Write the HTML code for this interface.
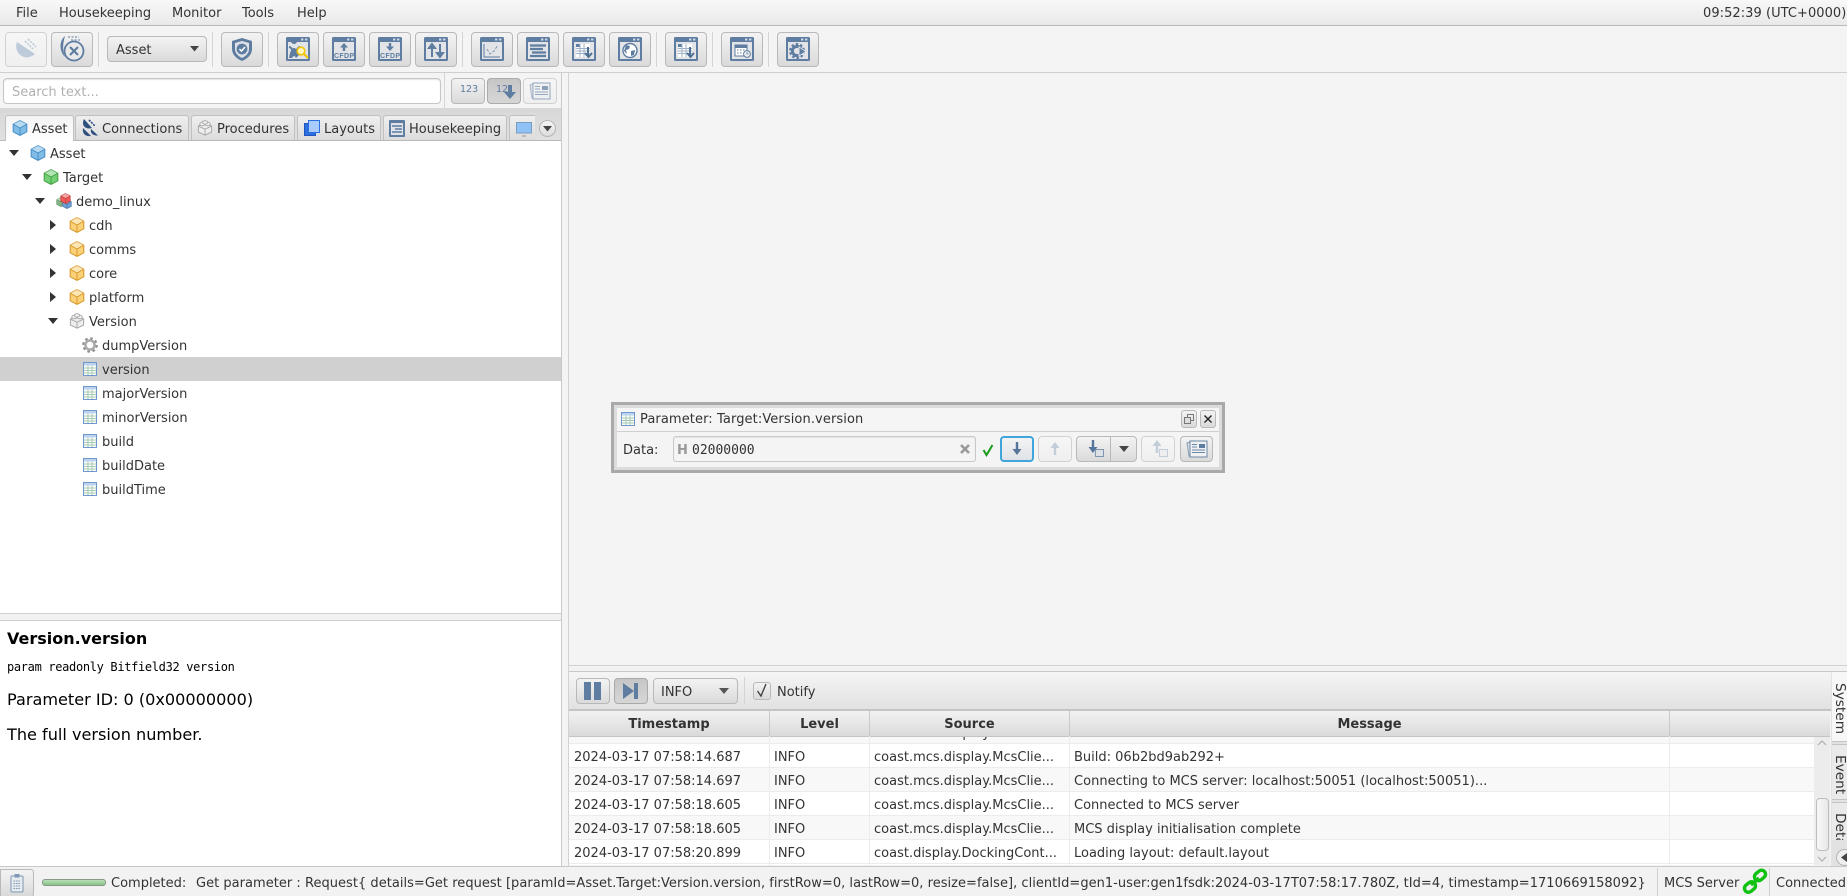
<!DOCTYPE html>
<html><head><meta charset="utf-8"><title>Coast</title>
<style>
*{box-sizing:border-box}
html,body{margin:0;padding:0;width:1847px;height:896px;overflow:hidden;background:#f4f4f4}
body{position:relative;font:13px/16px "DejaVu Sans","Liberation Sans",sans-serif;color:#333}
.a{position:absolute}
.t{position:absolute;white-space:nowrap;line-height:16px;margin-top:2px}
.b{position:absolute;border:1px solid #b9b9b9;border-radius:4px;background:linear-gradient(#f3f3f3,#dadada)}
.d{background:linear-gradient(#f6f6f6,#efefef);border-color:#d2d2d2}
.p{background:linear-gradient(#c6c6c6,#d6d6d6);border-color:#aaa}
.s{position:absolute;width:1px;background:#d4d4d4}
svg{position:absolute;overflow:visible}
.tab{position:absolute;top:115px;height:25px;border:1px solid #c0c0c0;border-bottom:0;border-radius:3px 3px 0 0;background:linear-gradient(#efefef,#dcdcdc)}
.row{position:absolute;left:0;width:561px;height:24px}
.lr{position:absolute;left:569px;width:1245px;height:24px;border-bottom:1px solid #ececec;overflow:hidden}
.lr span{position:absolute;top:6px;white-space:nowrap}
.th{position:absolute;top:711px;height:25px;font-weight:bold;text-align:center;line-height:27px;background:linear-gradient(#f2f2f2,#dadada);border-right:1px solid #c8c8c8;color:#333;overflow:hidden}
.vl{position:absolute;width:1px;top:736px;height:129px;background:#ececec}
.v{position:absolute;writing-mode:vertical-rl;white-space:nowrap;line-height:15px;font-size:13.7px}
</style></head><body>
<svg width="0" height="0" style="position:absolute">
<defs>
<symbol id="win" viewBox="0 0 24 24"><rect x="0" y="0" width="24" height="24" rx="1.5" fill="#5e7da1"/><rect x="2" y="5" width="20" height="17" fill="#e2e4e7"/><rect x="15" y="1.5" width="2.4" height="2" fill="#cdd8e4"/><rect x="19" y="1.5" width="2.4" height="2" fill="#cdd8e4"/></symbol>
<symbol id="cube" viewBox="0 0 16 16"><path d="M8 .6 14.8 4.2V11.8L8 15.4 1.2 11.8V4.2Z" stroke-width="1.1" stroke-linejoin="round"/><path d="M8 .6 14.8 4.2 8 8 1.2 4.2Z" fill="#fff" fill-opacity=".45" stroke="none"/><path d="M1.6 4.4 8 8 14.4 4.4M8 8V15" fill="none" stroke-width="1"/></symbol>
<symbol id="lego" viewBox="0 0 16 16"><path d="M8 3 14.6 6V12L8 15.2 1.4 12V6Z" fill="#eee" stroke="#a9a9a9"/><path d="M1.6 6.2 8 9.2 14.4 6.2M8 9.2V15" fill="none" stroke="#a9a9a9"/><ellipse cx="5.4" cy="4" rx="2.6" ry="1.7" fill="#f4f4f4" stroke="#a9a9a9"/><ellipse cx="10.6" cy="4" rx="2.6" ry="1.7" fill="#f4f4f4" stroke="#a9a9a9"/><ellipse cx="8" cy="2.4" rx="2.6" ry="1.7" fill="#f4f4f4" stroke="#a9a9a9"/></symbol>
<symbol id="param" viewBox="0 0 14 14"><rect x=".5" y=".5" width="13" height="13" fill="#fff" stroke="#6f97cc"/><rect x="1" y="1" width="12" height="2.5" fill="#bcd2ee"/><path d="M1 6H13M1 8.5H13M1 11H13M5 3.5V13M9 3.5V13" stroke="#a5c9b0" stroke-width="1" fill="none"/></symbol>
<symbol id="arr" viewBox="0 0 10 10"><path d="M0 2H10L5 8Z" fill="#333"/></symbol>
<symbol id="arr2" viewBox="0 0 10 10"><path d="M2 0V10L8 5Z" fill="#333"/></symbol>
<symbol id="tbl" viewBox="0 0 24 24"><use href="#win" width="24" height="24"/><rect x="4" y="7" width="14" height="13" fill="#fff"/><rect x="4" y="7" width="3.5" height="3" fill="#5e7da1"/><path d="M4 11.5H18M4 14H18M4 16.5H18M8 7V20M12 7V20" stroke="#9fb1c6" fill="none"/><path d="M16 10V19M13 16 16.5 20 20 16" fill="none" stroke="#4f6f94" stroke-width="2"/></symbol>
<symbol id="doc" viewBox="0 0 24 18"><path d="M2 3 8 1V15L4 16Z" fill="#d8dee5" stroke="#8c9fb4"/><rect x="5" y="1" width="17" height="16" fill="#eef0f2" stroke="#6c88a8"/><rect x="14" y="4" width="6" height="4" fill="#5e7da1"/><path d="M7 4.5H12M7 7H12M7 10H20M7 12.5H20" stroke="#6c88a8" fill="none"/></symbol>
</defs></svg>

<!-- menu -->
<div class="a" style="left:0;top:0;width:1847px;height:26px;background:linear-gradient(#f8f8f8,#e9e9e9);border-bottom:1px solid #b9b9b9"></div>
<span class="t" style="left:16px;top:4px">File</span>
<span class="t" style="left:59px;top:4px">Housekeeping</span>
<span class="t" style="left:172px;top:4px">Monitor</span>
<span class="t" style="left:242px;top:4px">Tools</span>
<span class="t" style="left:297px;top:4px">Help</span>
<span class="t" style="left:1703px;top:4px;letter-spacing:.05px">09:52:39 (UTC+0000)</span>

<!-- toolbar -->
<div class="a" style="left:0;top:72px;width:1847px;height:1px;background:#cfcfcf"></div>
<div class="b d" style="left:5px;top:32px;width:42px;height:35px"></div>
<svg style="left:16px;top:39px" width="20" height="20"><path d="M1 3C-3 13 8 24 19 15Z" fill="#bccada"/><path d="M9 2 17 10M12 0 20 8" stroke="#bccada" stroke-width="1.6" fill="none" stroke-dasharray="2 1.2"/></svg>
<div class="b" style="left:51px;top:32px;width:42px;height:35px"></div>
<svg style="left:59px;top:35px" width="26" height="29"><path d="M6 1C0 6 0 16 6 22 3 15 4 8 6 1Z" fill="#5e7da1"/><path d="M9 2h11M12 5h10" stroke="#5e7da1" stroke-dasharray="2 1.5" fill="none"/><circle cx="15" cy="16" r="9.5" fill="#eaeaea" stroke="#5e7da1" stroke-width="1.8"/><path d="M11 12l8 8m0-8-8 8" stroke="#5e7da1" stroke-width="2.2"/></svg>
<div class="s" style="left:98px;top:32px;height:35px"></div>
<div class="b" style="left:107px;top:36px;width:100px;height:26px"></div>
<span class="t" style="left:116px;top:41px">Asset</span>
<svg style="left:189px;top:44px" width="11" height="10"><path d="M1 2H10L5.5 7.5Z" fill="#444"/></svg>
<div class="s" style="left:212px;top:32px;height:35px"></div>
<div class="b" style="left:221px;top:32px;width:42px;height:35px"></div>
<svg style="left:231px;top:37px" width="22" height="25"><path d="M11 1 21 4V12C21 18 16 22 11 24 6 22 1 18 1 12V4Z" fill="#5e7da1"/><path d="M11 4 18 6V12C18 16 15 19 11 21 7 19 4 16 4 12V6Z" fill="#dfe3e8"/><circle cx="11" cy="12" r="5.4" fill="#5e7da1"/><path d="M8.4 12 10.4 14 14 10" stroke="#fff" stroke-width="1.5" fill="none"/></svg>
<div class="s" style="left:268px;top:32px;height:35px"></div>

<div class="b" style="left:277px;top:32px;width:42px;height:35px"></div>
<svg style="left:286px;top:37px" width="24" height="24"><use href="#win" width="24" height="24"/><path d="M8 7a3 3 0 1 1 .1 0ZM3 21C4 14 6 11 8 11 10 11 11 14 13 18L10 21 8 18 6 21Z" fill="#5e7da1"/><path d="M3 10C5 10 6 12 7 14M14 10C12 10 10 14 7 19" stroke="#5e7da1" stroke-width="2" fill="none"/><circle cx="15" cy="14" r="3.8" fill="#fff6c4" stroke="#f2c500" stroke-width="1.6"/><path d="M18 17 22 21" stroke="#f2c500" stroke-width="2.2"/></svg>
<div class="b" style="left:323px;top:32px;width:42px;height:35px"></div>
<svg style="left:332px;top:37px" width="24" height="24"><use href="#win" width="24" height="24"/><path d="M12 6 8 10.5H10.8V14H13.2V10.5H16Z" fill="#5e7da1"/><text x="12" y="21" font-family="Liberation Sans" font-size="7" font-weight="bold" text-anchor="middle" fill="#5e7da1" textLength="20">CFDP</text></svg>
<div class="b" style="left:369px;top:32px;width:42px;height:35px"></div>
<svg style="left:378px;top:37px" width="24" height="24"><use href="#win" width="24" height="24"/><path d="M12 14 8 9.5H10.8V6H13.2V9.5H16Z" fill="#5e7da1"/><text x="12" y="21" font-family="Liberation Sans" font-size="7" font-weight="bold" text-anchor="middle" fill="#5e7da1" textLength="20">CFDP</text></svg>
<div class="b" style="left:415px;top:32px;width:42px;height:35px"></div>
<svg style="left:424px;top:37px" width="24" height="24"><use href="#win" width="24" height="24"/><path d="M8 7V20M8 7 5 11H11ZM16 20V7M16 20 13 16H19Z" stroke="#5e7da1" stroke-width="2" fill="#5e7da1"/></svg>
<div class="s" style="left:462px;top:32px;height:35px"></div>

<div class="b" style="left:471px;top:32px;width:42px;height:35px"></div>
<svg style="left:480px;top:37px" width="24" height="24"><use href="#win" width="24" height="24"/><path d="M4 7V20H20" stroke="#5e7da1" fill="none"/><path d="M7 12 10 17 14 14 18 8" stroke="#7f97b3" fill="none" stroke-dasharray="3 1.5"/></svg>
<div class="b" style="left:517px;top:32px;width:42px;height:35px"></div>
<svg style="left:526px;top:37px" width="24" height="24"><use href="#win" width="24" height="24"/><path d="M4 8.5H20M4 12H17M6 15.5H20M4 19H20" stroke="#5e7da1" stroke-width="2.2" fill="none"/></svg>
<div class="b" style="left:563px;top:32px;width:42px;height:35px"></div>
<svg style="left:572px;top:37px" width="24" height="24"><use href="#tbl" width="24" height="24"/></svg>
<div class="b" style="left:609px;top:32px;width:42px;height:35px"></div>
<svg style="left:618px;top:37px" width="24" height="24"><use href="#win" width="24" height="24"/><circle cx="12" cy="13.5" r="7" fill="#fff" stroke="#5e7da1" stroke-width="1.4"/><path d="M8 8 12 9 11 12 8 13 9 17 6 14ZM13 14 17 13 16 18 13 19Z" fill="#5e7da1"/></svg>
<div class="s" style="left:656px;top:32px;height:35px"></div>
<div class="b" style="left:665px;top:32px;width:42px;height:35px"></div>
<svg style="left:674px;top:37px" width="24" height="24"><use href="#tbl" width="24" height="24"/></svg>
<div class="s" style="left:712px;top:32px;height:35px"></div>
<div class="b" style="left:721px;top:32px;width:42px;height:35px"></div>
<svg style="left:730px;top:37px" width="24" height="24"><use href="#win" width="24" height="24"/><rect x="5" y="8" width="12" height="11" fill="#fff" stroke="#5e7da1"/><rect x="5" y="8" width="12" height="3" fill="#5e7da1"/><path d="M7 13h1.5M10 13h1.5M13 13h1.5M7 16h1.5M10 16h1.5" stroke="#5e7da1"/><circle cx="17" cy="17" r="3.4" fill="#eee" stroke="#5e7da1"/><path d="M17 15v2h1.5" stroke="#5e7da1" fill="none" stroke-width=".8"/></svg>
<div class="s" style="left:768px;top:32px;height:35px"></div>
<div class="b" style="left:777px;top:32px;width:42px;height:35px"></div>
<svg style="left:786px;top:37px" width="24" height="24"><use href="#win" width="24" height="24"/><circle cx="11" cy="14" r="4.6" fill="none" stroke="#5e7da1" stroke-width="3"/><circle cx="11" cy="14" r="7" fill="none" stroke="#5e7da1" stroke-width="2" stroke-dasharray="2.5 2"/><path d="M13 10 20 14.5 13 19Z" fill="#5e7da1" stroke="#e2e4e7"/></svg>

<!-- left panel -->
<div class="a" style="left:561px;top:73px;width:1px;height:793px;background:#c9c9c9"></div>
<div class="a" style="left:568px;top:73px;width:1px;height:793px;background:#d2d2d2"></div>
<div class="a" style="left:444px;top:73px;width:1px;height:35px;background:#d6d6d6"></div>
<div class="a" style="left:3px;top:78px;width:438px;height:26px;background:#fff;border:1px solid #c6c6c6;border-radius:4px;box-shadow:inset 0 1px 1px #e4e4e4"></div>
<span class="t" style="left:12px;top:83px;color:#b0b0b0">Search text...</span>
<div class="b" style="left:451px;top:78px;width:34px;height:26px"></div>
<span class="t" style="left:460px;top:81px;font:9.5px/14px 'DejaVu Sans',sans-serif;color:#5e7da1">123</span>
<div class="b p" style="left:487px;top:78px;width:34px;height:26px"></div>
<span class="t" style="left:496px;top:81px;font:9.5px/14px 'DejaVu Sans',sans-serif;color:#5e7da1">12</span>
<svg style="left:503px;top:85px" width="14" height="16"><path d="M5 0H9V7H13L7 14 1 7H5Z" fill="#5e7da1"/></svg>
<div class="b d" style="left:523px;top:78px;width:34px;height:26px"></div>
<svg style="left:528px;top:82px;opacity:.7" width="24" height="18"><use href="#doc" width="24" height="18"/></svg>

<div class="a" style="left:0;top:108px;width:561px;height:33px;background:linear-gradient(#d8d8d8,#e0e0e0);border-bottom:1px solid #b9b9b9"></div>
<div class="tab" style="left:5px;width:69px;height:26px;background:linear-gradient(#f3f3f3,#fff)"></div>
<div class="tab" style="left:75px;width:114px"></div>
<div class="tab" style="left:191px;width:104px"></div>
<div class="tab" style="left:297px;width:84px"></div>
<div class="tab" style="left:383px;width:124px"></div>
<div class="tab" style="left:509px;width:26px;border-right:0;border-radius:3px 0 0 0"></div>
<svg style="left:12px;top:120px;fill:#7fbde8;stroke:#4a8fc4" width="16" height="16"><use href="#cube" width="16" height="16"/></svg>
<span class="t" style="left:32px;top:120px">Asset</span>
<svg style="left:82px;top:119px" width="16" height="18"><path d="M2 0C-1 6 3 11 10 9Z" fill="#2e4f7e"/><path d="M9 10C8 14 11 17 16 16.5Z" fill="#2e4f7e"/><path d="M1 9C0 14 3 18 9 17Z" fill="#2e4f7e"/><path d="M7 1l6 6" stroke="#2e4f7e" stroke-width="1.6" stroke-dasharray="2 1"/></svg>
<span class="t" style="left:102px;top:120px">Connections</span>
<svg style="left:197px;top:120px" width="16" height="16"><use href="#lego" width="16" height="16"/></svg>
<span class="t" style="left:217px;top:120px">Procedures</span>
<svg style="left:304px;top:120px" width="16" height="17"><rect x=".5" y="3.5" width="11" height="12" fill="#2d6ee0" stroke="#1e55c0"/><rect x="4.5" y=".5" width="11" height="12" fill="#a8ccff" stroke="#2d6ee0"/></svg>
<span class="t" style="left:324px;top:120px">Layouts</span>
<svg style="left:389px;top:120px" width="16" height="17"><rect x="0" y="0" width="16" height="17" rx="1" fill="#5e7da1"/><rect x="2" y="3" width="12" height="12" fill="#dfe3e8"/><path d="M3 6H13M6 9H13M3 12H13" stroke="#5e7da1" stroke-width="1.6"/></svg>
<span class="t" style="left:409px;top:120px">Housekeeping</span>
<svg style="left:516px;top:122px" width="16" height="15"><rect x=".5" y=".5" width="15" height="10.5" fill="#8fc3f7" stroke="#7a9cc0"/><path d="M6 14h4" stroke="#aaa" stroke-width="1.4"/></svg>
<div class="a" style="left:539px;top:120px;width:17px;height:17px;border-radius:50%;border:1px solid #b5b5b5;background:linear-gradient(#f5f5f5,#dcdcdc)"></div>
<svg style="left:543px;top:126px" width="9" height="6"><path d="M0 0H9L4.5 5.5Z" fill="#444"/></svg>

<div class="a" style="left:0;top:141px;width:561px;height:472px;background:#fff"></div>
<div class="row" style="top:357px;background:#d0d0d0"></div>

<svg style="left:9px;top:148px" width="10" height="10"><use href="#arr" width="10" height="10"/></svg>
<svg style="left:30px;top:145px;fill:#7fbde8;stroke:#4a8fc4" width="16" height="16"><use href="#cube" width="16" height="16"/></svg>
<span class="t" style="left:50px;top:145px">Asset</span>
<svg style="left:22px;top:172px" width="10" height="10"><use href="#arr" width="10" height="10"/></svg>
<svg style="left:43px;top:169px;fill:#75d075;stroke:#46a346" width="16" height="16"><use href="#cube" width="16" height="16"/></svg>
<span class="t" style="left:63px;top:169px">Target</span>
<svg style="left:35px;top:196px" width="10" height="10"><use href="#arr" width="10" height="10"/></svg>
<svg style="left:56px;top:193px;fill:#8ab58a;stroke:#5f8f5f" width="10" height="10" ><use href="#cube" width="10" height="10" y="4"/></svg>
<svg style="left:62px;top:199px;fill:#6f9fd4;stroke:#3f6fa8" width="10" height="10"><use href="#cube" width="10" height="10"/></svg>
<svg style="left:60px;top:193px;fill:#ee5a5a;stroke:#c23a3a" width="11" height="11"><use href="#cube" width="11" height="11"/></svg>
<span class="t" style="left:76px;top:193px">demo_linux</span>

<svg style="left:48px;top:220px" width="10" height="10"><use href="#arr2" width="10" height="10"/></svg>
<svg style="left:69px;top:217px;fill:#fbd27a;stroke:#d99a2b" width="16" height="16"><use href="#cube" width="16" height="16"/></svg>
<span class="t" style="left:89px;top:217px">cdh</span>
<svg style="left:48px;top:244px" width="10" height="10"><use href="#arr2" width="10" height="10"/></svg>
<svg style="left:69px;top:241px;fill:#fbd27a;stroke:#d99a2b" width="16" height="16"><use href="#cube" width="16" height="16"/></svg>
<span class="t" style="left:89px;top:241px">comms</span>
<svg style="left:48px;top:268px" width="10" height="10"><use href="#arr2" width="10" height="10"/></svg>
<svg style="left:69px;top:265px;fill:#fbd27a;stroke:#d99a2b" width="16" height="16"><use href="#cube" width="16" height="16"/></svg>
<span class="t" style="left:89px;top:265px">core</span>
<svg style="left:48px;top:292px" width="10" height="10"><use href="#arr2" width="10" height="10"/></svg>
<svg style="left:69px;top:289px;fill:#fbd27a;stroke:#d99a2b" width="16" height="16"><use href="#cube" width="16" height="16"/></svg>
<span class="t" style="left:89px;top:289px">platform</span>
<svg style="left:48px;top:316px" width="10" height="10"><use href="#arr" width="10" height="10"/></svg>
<svg style="left:69px;top:313px" width="16" height="16"><use href="#lego" width="16" height="16"/></svg>
<span class="t" style="left:89px;top:313px">Version</span>

<svg style="left:82px;top:337px" width="16" height="16"><circle cx="8" cy="8" r="6.2" fill="none" stroke="#8f8f8f" stroke-width="3.2" stroke-dasharray="2.4 2.47"/><circle cx="8" cy="8" r="4.6" fill="none" stroke="#a9a9a9" stroke-width="2.4"/></svg>
<span class="t" style="left:102px;top:337px">dumpVersion</span>
<svg style="left:83px;top:362px" width="14" height="14"><use href="#param" width="14" height="14"/></svg>
<span class="t" style="left:102px;top:361px">version</span>
<svg style="left:83px;top:386px" width="14" height="14"><use href="#param" width="14" height="14"/></svg>
<span class="t" style="left:102px;top:385px">majorVersion</span>
<svg style="left:83px;top:410px" width="14" height="14"><use href="#param" width="14" height="14"/></svg>
<span class="t" style="left:102px;top:409px">minorVersion</span>
<svg style="left:83px;top:434px" width="14" height="14"><use href="#param" width="14" height="14"/></svg>
<span class="t" style="left:102px;top:433px">build</span>
<svg style="left:83px;top:458px" width="14" height="14"><use href="#param" width="14" height="14"/></svg>
<span class="t" style="left:102px;top:457px">buildDate</span>
<svg style="left:83px;top:482px" width="14" height="14"><use href="#param" width="14" height="14"/></svg>
<span class="t" style="left:102px;top:481px">buildTime</span>

<!-- splitter + details -->
<div class="a" style="left:0;top:613px;width:561px;height:8px;background:#f1f1f1;border-top:1px solid #cfcfcf;border-bottom:1px solid #cfcfcf"></div>
<div class="a" style="left:0;top:621px;width:561px;height:245px;background:#fff"></div>
<span class="t" style="left:7px;top:629px;font-weight:bold;font-size:16px;color:#000">Version.version</span>
<span class="t" style="left:7px;top:657px;font-family:'DejaVu Sans Mono',monospace;font-size:12px;letter-spacing:-.33px;color:#000">param readonly Bitfield32 version</span>
<span class="t" style="left:7px;top:690px;font-size:16.1px;color:#000">Parameter ID: 0 (0x00000000)</span>
<span class="t" style="left:7px;top:725px;font-size:16.1px;color:#000">The full version number.</span>

<!-- parameter window -->
<div class="a" style="left:611px;top:402px;width:614px;height:71px;border:3px solid #a9a9a9;background:#dcdcdc"></div>
<div class="a" style="left:617px;top:408px;width:602px;height:23px;background:#f5f5f5"></div>
<div class="a" style="left:617px;top:431px;width:602px;height:1px;background:#cfcfcf"></div>
<div class="a" style="left:617px;top:432px;width:602px;height:35px;background:#f4f4f4"></div>
<svg style="left:621px;top:412px" width="14" height="14"><use href="#param" width="14" height="14"/></svg>
<span class="t" style="left:640px;top:410px;letter-spacing:.1px">Parameter: Target:Version.version</span>
<div class="b" style="left:1181px;top:410px;width:16px;height:18px;border-radius:3px"></div>
<svg style="left:1184px;top:414px" width="10" height="10"><rect x="3.5" y=".5" width="6" height="6" fill="none" stroke="#777"/><rect x=".5" y="3.5" width="6" height="6" fill="#ddd" stroke="#777"/></svg>
<div class="b" style="left:1200px;top:410px;width:16px;height:18px;border-radius:3px"></div>
<svg style="left:1204px;top:415px" width="8" height="8"><path d="M.5.5 7.5 7.5M7.5.5.5 7.5" stroke="#222" stroke-width="1.4"/></svg>
<span class="t" style="left:623px;top:441px">Data:</span>
<div class="a" style="left:673px;top:436px;width:303px;height:26px;background:#f4f4f4;border:1px solid #c8c8c8;border-radius:3px;box-shadow:inset 0 1px 1px #e4e4e4"></div>
<span class="t" style="left:677px;top:441px;font-weight:bold;color:#999">H</span>
<span class="t" style="left:692px;top:441px;font-family:'DejaVu Sans Mono',monospace;font-size:13px">02000000</span>
<svg style="left:960px;top:444px" width="10" height="10"><path d="M1 1 9 9M9 1 1 9" stroke="#999" stroke-width="2.6"/></svg>
<svg style="left:982px;top:444px" width="12" height="12"><path d="M1.5 6 4.5 11 10.5 1" stroke="#1c9a1c" stroke-width="2" fill="none"/></svg>
<div class="b" style="left:1000px;top:436px;width:34px;height:26px;border:2px solid #3fa5db;background:linear-gradient(#f3f3f3,#dfe3e8)"></div>
<svg style="left:1010px;top:442px" width="14" height="16"><path d="M5.8 0H8.2V7H11.5L7 13 2.5 7H5.8Z" fill="#56759a"/></svg>
<div class="b d" style="left:1038px;top:436px;width:34px;height:26px"></div>
<svg style="left:1048px;top:442px" width="14" height="16"><path d="M5.8 13H8.2V6H11.5L7 0 2.5 6H5.8Z" fill="#c2cdd9"/></svg>
<div class="b" style="left:1076px;top:436px;width:61px;height:26px"></div>
<div class="a" style="left:1110px;top:436px;width:1px;height:26px;background:#b9b9b9"></div>
<svg style="left:1086px;top:440px" width="20" height="18"><path d="M5.8 0H8.2V7H11.5L7 13 2.5 7H5.8Z" fill="#56759a"/><rect x="9.5" y="9.5" width="8" height="7" fill="#dde1e6" stroke="#7f97b3"/></svg>
<svg style="left:1119px;top:446px" width="10" height="7"><path d="M0 0H10L5 6Z" fill="#444"/></svg>
<div class="b d" style="left:1141px;top:436px;width:34px;height:26px"></div>
<svg style="left:1150px;top:440px" width="20" height="18"><path d="M5.8 13H8.2V6H11.5L7 0 2.5 6H5.8Z" fill="#c2cdd9"/><rect x="9.5" y="9.5" width="8" height="7" fill="#eee" stroke="#c2cdd9"/></svg>
<div class="b" style="left:1180px;top:436px;width:33px;height:26px"></div>
<svg style="left:1185px;top:440px" width="24" height="18"><use href="#doc" width="24" height="18"/></svg>

<!-- log panel -->
<div class="a" style="left:569px;top:665px;width:1278px;height:7px;background:#f2f2f2;border-top:1px solid #d2d2d2;border-bottom:1px solid #c9c9c9"></div>
<div class="a" style="left:569px;top:672px;width:1262px;height:38px;background:linear-gradient(#f5f5f5,#e1e1e1);border-bottom:1px solid #c4c4c4"></div>
<div class="b" style="left:576px;top:678px;width:34px;height:26px"></div>
<svg style="left:584px;top:682px" width="18" height="18"><rect x="0" y="0" width="7" height="18" fill="#5e7da1"/><rect x="10" y="0" width="7" height="18" fill="#5e7da1"/></svg>
<div class="b p" style="left:614px;top:678px;width:34px;height:26px"></div>
<svg style="left:623px;top:683px" width="16" height="16"><path d="M0 0 11 8 0 16Z" fill="#5e7da1"/><rect x="11" y="0" width="4" height="16" fill="#5e7da1"/></svg>
<div class="b" style="left:653px;top:678px;width:85px;height:26px"></div>
<span class="t" style="left:661px;top:683px">INFO</span>
<svg style="left:719px;top:687px" width="10" height="8"><path d="M0 1H10L5 7Z" fill="#555"/></svg>
<div class="s" style="left:744px;top:677px;height:27px"></div>
<div class="b" style="left:753px;top:682px;width:18px;height:18px;border-radius:3px"></div>
<svg style="left:755px;top:683px" width="14" height="15"><path d="M2.5 8 6 13 11 1" stroke="#444" stroke-width="1.4" fill="none"/></svg>
<span class="t" style="left:777px;top:683px">Notify</span>

<div class="a" style="left:569px;top:710px;width:1262px;height:1px;background:#c4c4c4"></div>
<div class="th" style="left:569px;width:201px">Timestamp</div>
<div class="th" style="left:770px;width:100px">Level</div>
<div class="th" style="left:870px;width:200px">Source</div>
<div class="th" style="left:1070px;width:600px">Message</div>
<div class="th" style="left:1670px;width:160px;border-right:0"></div>
<div class="a" style="left:569px;top:736px;width:1261px;height:1px;background:#c4c4c4"></div>
<div class="a" style="left:569px;top:737px;width:1245px;height:128px;background:#fff"></div>

<div class="lr" style="top:737px;height:7px;background:#f8f8f8"><span style="left:5px;top:-11px">2024-03-17 07:58:14.673</span><span style="left:205px;top:-11px">INFO</span><span style="left:305px;top:-11px">coast.mcs.display.McsClie...</span><span style="left:505px;top:-11px">Version: 0.1.0</span></div>
<div class="lr" style="top:744px;background:#fff"><span style="left:5px">2024-03-17 07:58:14.687</span><span style="left:205px">INFO</span><span style="left:305px">coast.mcs.display.McsClie...</span><span style="left:505px">Build: 06b2bd9ab292+</span></div>
<div class="lr" style="top:768px;background:#f8f8f8"><span style="left:5px">2024-03-17 07:58:14.697</span><span style="left:205px">INFO</span><span style="left:305px">coast.mcs.display.McsClie...</span><span style="left:505px;letter-spacing:.02px">Connecting to MCS server: localhost:50051 (localhost:50051)...</span></div>
<div class="lr" style="top:792px;background:#fff"><span style="left:5px">2024-03-17 07:58:18.605</span><span style="left:205px">INFO</span><span style="left:305px">coast.mcs.display.McsClie...</span><span style="left:505px">Connected to MCS server</span></div>
<div class="lr" style="top:816px;background:#f8f8f8"><span style="left:5px">2024-03-17 07:58:18.605</span><span style="left:205px">INFO</span><span style="left:305px">coast.mcs.display.McsClie...</span><span style="left:505px">MCS display initialisation complete</span></div>
<div class="lr" style="top:840px;background:#fff"><span style="left:5px">2024-03-17 07:58:20.899</span><span style="left:205px">INFO</span><span style="left:305px">coast.display.DockingCont...</span><span style="left:505px">Loading layout: default.layout</span></div>
<div class="vl" style="left:769px"></div>
<div class="vl" style="left:869px"></div>
<div class="vl" style="left:1069px"></div>
<div class="vl" style="left:1669px"></div>

<!-- scrollbar -->
<div class="a" style="left:1814px;top:737px;width:16px;height:128px;background:#ececec"></div>
<svg style="left:1817px;top:740px" width="10" height="6"><path d="M1 5 5 1 9 5" stroke="#aaa" fill="none"/></svg>
<svg style="left:1817px;top:856px" width="10" height="6"><path d="M1 1 5 5 9 1" stroke="#aaa" fill="none"/></svg>
<div class="a" style="left:1816px;top:798px;width:13px;height:53px;background:linear-gradient(90deg,#f8f8f8,#e8e8e8);border:1px solid #bdbdbd;border-radius:4px"></div>

<!-- side tabs -->
<div class="a" style="left:1831px;top:672px;width:16px;height:194px;background:#e2e2e2"></div>
<div class="a" style="left:1832px;top:672px;width:15px;height:70px;background:#f7f7f7;border-bottom:1px solid #c4c4c4"></div>
<div class="a" style="left:1832px;top:744px;width:15px;height:56px;background:#eaeaea;border-top:1px solid #c4c4c4;border-bottom:1px solid #c4c4c4"></div>
<div class="a" style="left:1832px;top:802px;width:15px;height:38px;background:#eaeaea;border-top:1px solid #c4c4c4;overflow:hidden"><span class="v" style="left:0;top:10px">Details</span></div>
<span class="v" style="left:1832px;top:683px">System</span>
<span class="v" style="left:1832px;top:755px">Event</span>
<div class="a" style="left:1836px;top:849px;width:17px;height:17px;border-radius:50%;border:1px solid #b5b5b5;background:#efefef"></div>
<svg style="left:1841px;top:853px" width="6" height="9"><path d="M6 0V9L0 4.5Z" fill="#444"/></svg>

<!-- status bar -->
<div class="a" style="left:0;top:866px;width:1847px;height:30px;background:#f2f2f2;border-top:1px solid #c9c9c9"></div>
<div class="b" style="left:0;top:869px;width:34px;height:28px;border-radius:0 3px 3px 0"></div>
<svg style="left:10px;top:873px" width="14" height="20"><rect x="1" y="3" width="12" height="16" rx="1" fill="#e6ebf0" stroke="#7f97b3"/><rect x="4.5" y="1" width="5" height="3.5" fill="#7f97b3"/><path d="M3.5 8H10.5M3.5 10.5H10.5M3.5 13H10.5M3.5 15.5H10.5" stroke="#7f97b3" stroke-dasharray="1.6 .8"/></svg>
<div class="a" style="left:42px;top:879px;width:64px;height:7px;border-radius:3px;background:linear-gradient(#b9e0b9,#86c486);border:1px solid #8a9a8a"></div>
<span class="t" style="left:111px;top:874px">Completed:</span>
<span class="t" style="left:196px;top:874px;letter-spacing:.025px">Get parameter : Request{ details=Get request [paramId=Asset.Target:Version.version, firstRow=0, lastRow=0, resize=false], clientId=gen1-user:gen1fsdk:2024-03-17T07:58:17.780Z, tId=4, timestamp=1710669158092}</span>
<div class="a" style="left:1657px;top:868px;width:1px;height:28px;background:#d0d0d0"></div>
<span class="t" style="left:1664px;top:874px">MCS Server</span>
<svg style="left:1742px;top:870px" width="26" height="24"><g fill="none" stroke="#12c212" stroke-width="3.4"><rect x="12" y="1.5" width="12" height="8" rx="4" transform="rotate(-40 18 5.5)"/><rect x="2" y="13" width="12" height="8" rx="4" transform="rotate(-40 8 17)"/><path d="M9 15 17 8"/></g></svg>
<div class="a" style="left:1769px;top:868px;width:1px;height:28px;background:#d0d0d0"></div>
<span class="t" style="left:1776px;top:874px">Connected</span>
</body></html>
